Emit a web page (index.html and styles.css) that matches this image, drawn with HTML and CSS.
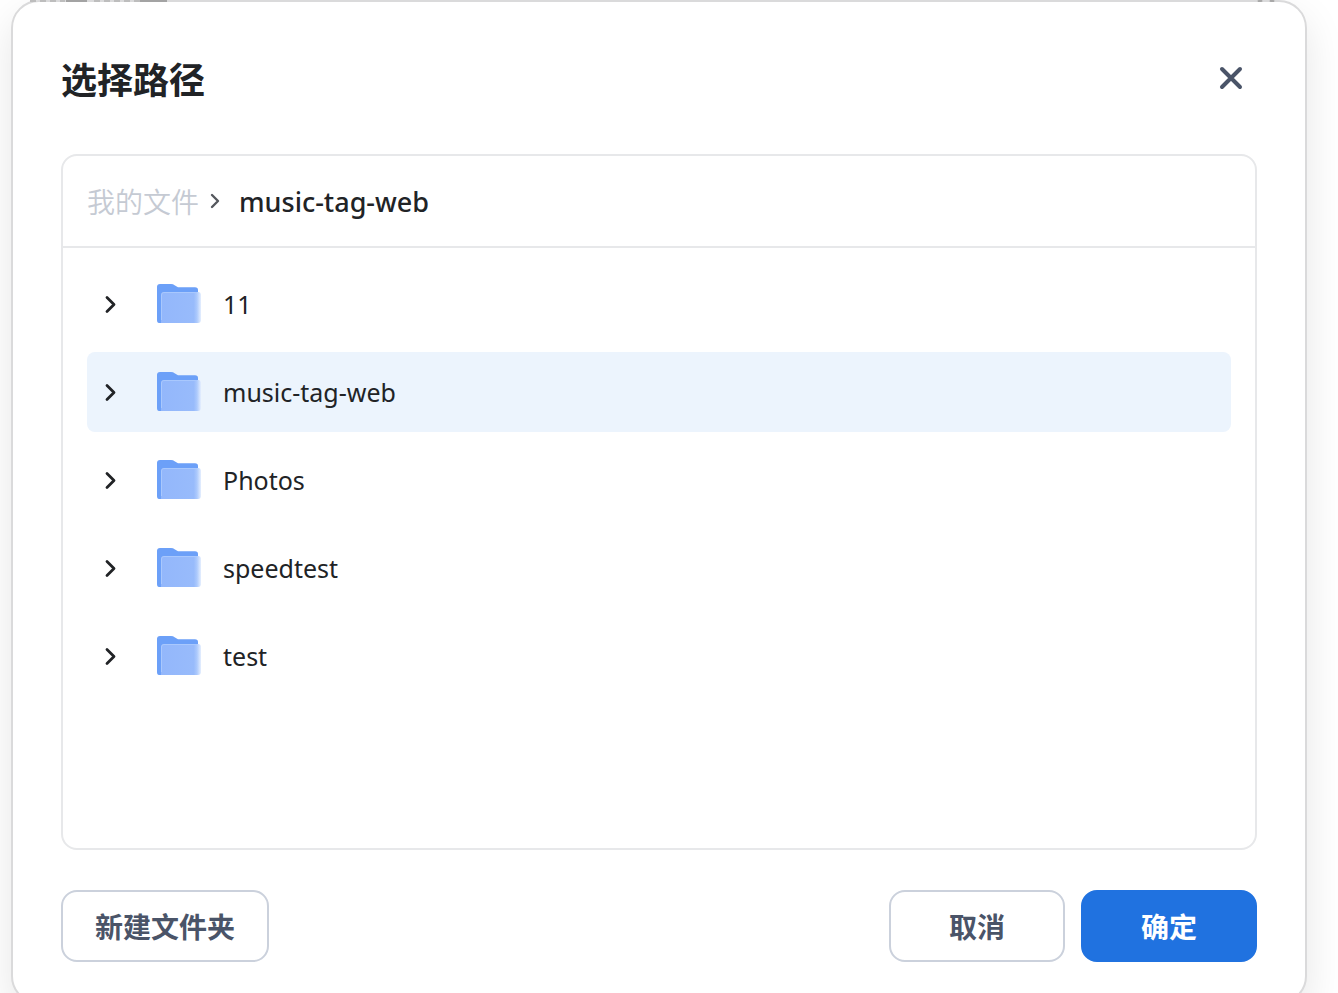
FILE: index.html
```html
<!DOCTYPE html>
<html lang="zh-CN">
<head>
  <meta charset="UTF-8">
  <meta name="viewport" content="width=device-width, initial-scale=1.0">
  <title>选择路径</title>
  <link rel="stylesheet" href="styles.css">
</head>
<body>

  <!-- Shared icons -->
  <svg class="icon-defs" aria-hidden="true">
    <defs>
      <linearGradient id="folderFront" x1="0" y1="0" x2="1" y2="0">
        <stop offset="0" stop-color="#93b7fb"/>
        <stop offset="0.82" stop-color="#98bbfb"/>
        <stop offset="0.9" stop-color="#adcafc"/>
        <stop offset="1" stop-color="#e6effe"/>
      </linearGradient>
      <symbol id="folder" viewBox="0 0 46 40">
        <path d="M1 3Q1 0 4 0H15Q17 0 19 1.400L22 3.200H39Q42 3.200 42 6V34L6 39H3Q1 39 1 36Z" fill="#6ca0f8"/>
        <path d="M5 11Q5 8 8 8H42Q45 8 45 11V36Q45 39 42 39H5Z" fill="url(#folderFront)"/>
        <path d="M5.500 36V11Q5.500 8.500 8 8.500H41" fill="none" stroke="#a9c8fd"/>
      </symbol>
      <symbol id="chevron" viewBox="0 0 24 24">
        <path d="M8 5.500L15 12.500L8 19.500" fill="none" stroke="currentColor" stroke-width="2.800" stroke-linecap="round" stroke-linejoin="round"/>
      </symbol>
      <symbol id="chevron-small" viewBox="0 0 24 24">
        <path d="M9 6L15 12L9 18" fill="none" stroke="currentColor" stroke-width="2.400" stroke-linecap="round" stroke-linejoin="round"/>
      </symbol>
    </defs>
  </svg>

  <main class="dialog" role="dialog" aria-labelledby="dialogTitle">
    <!-- Edge of the page that shows above the dialog -->
    <svg class="page-edge page-edge-left" viewBox="0 0 138 2" aria-hidden="true">
      <path d="M0 1H35M64 1H110" stroke="#bdbdbd" stroke-width="2" stroke-dasharray="6 4"/>
      <path d="M36 1H57M110 1H137" stroke="#a3a3a3" stroke-width="2"/>
    </svg>
    <svg class="page-edge page-edge-right" viewBox="0 0 18 2" aria-hidden="true">
      <path d="M1 2L5 0M17 2L13 0" stroke="#a8a8a8" stroke-width="3"/>
    </svg>

    <header class="dialog-header">
      <h1 id="dialogTitle">选择路径</h1>
      <button class="close" type="button" aria-label="关闭">
        <svg viewBox="0 0 32 32"><path d="M7 7L25 25M25 7L7 25" fill="none" stroke="currentColor" stroke-width="4" stroke-linecap="round"/></svg>
      </button>
    </header>

    <section class="browser">
      <nav class="breadcrumb">
        <a href="#">我的文件</a>
        <svg class="chevron"><use href="#chevron-small"/></svg>
        <span class="current">music-tag-web</span>
      </nav>
      <ul class="folders">
        <li><button class="folder" type="button"><svg class="chevron"><use href="#chevron"/></svg><svg class="folder-icon"><use href="#folder"/></svg><span>11</span></button></li>
        <li><button class="folder selected" type="button"><svg class="chevron"><use href="#chevron"/></svg><svg class="folder-icon"><use href="#folder"/></svg><span>music-tag-web</span></button></li>
        <li><button class="folder" type="button"><svg class="chevron"><use href="#chevron"/></svg><svg class="folder-icon"><use href="#folder"/></svg><span>Photos</span></button></li>
        <li><button class="folder" type="button"><svg class="chevron"><use href="#chevron"/></svg><svg class="folder-icon"><use href="#folder"/></svg><span>speedtest</span></button></li>
        <li><button class="folder" type="button"><svg class="chevron"><use href="#chevron"/></svg><svg class="folder-icon"><use href="#folder"/></svg><span>test</span></button></li>
      </ul>
    </section>

    <footer class="actions">
      <button class="btn new-folder" type="button">新建文件夹</button>
      <button class="btn" type="button">取消</button>
      <button class="btn primary" type="button">确定</button>
    </footer>
  </main>

</body>
</html>
```

FILE: styles.css
```css
* {
  box-sizing: border-box;
}

body {
  margin: 0;
  height: 100vh;
  padding: 0 31px 0 11px;
  overflow: hidden;
  background-color: #fff;
  color: #212326;
  font-family: "Noto Sans", "Noto Sans CJK SC", sans-serif;
  font-size: 25px;
}

button {
  font: inherit;
  color: inherit;
  border: none;
  background: none;
  cursor: pointer;
}

.icon-defs {
  position: absolute;
  width: 0;
  height: 0;
}

/* Dialog */
.dialog {
  position: relative;
  display: flex;
  flex-direction: column;
  min-height: calc(100vh + 11px);
  padding: 48px 48px 40px;
  border: 2px solid #dadadb;
  border-radius: 28px;
  background-color: #fff;
  box-shadow: 0 16px 40px rgba(0, 0, 0, 0.1);
}

.page-edge {
  position: absolute;
  top: -2px;
  height: 2px;
}

.page-edge-left {
  left: 17px;
  width: 138px;
}

.page-edge-right {
  right: 30px;
  width: 18px;
}

.dialog-header {
  display: flex;
  align-items: center;
  justify-content: space-between;
  height: 56px;
  margin-bottom: 48px;
  padding-right: 8px;
}

h1 {
  margin: 0;
  font-family: "Noto Sans CJK SC", sans-serif;
  font-size: 36px;
  line-height: 56px;
}

.close {
  width: 36px;
  height: 36px;
  padding: 2px;
  color: #4a5468;
}

.close svg {
  display: block;
  width: 32px;
  height: 32px;
}

/* Folder browser */
.browser {
  flex: 1;
  border: 2px solid #e7e8ea;
  border-radius: 16px;
}

.breadcrumb {
  display: flex;
  align-items: center;
  gap: 4px;
  height: 92px;
  padding: 0 24px;
  border-bottom: 2px solid #e7e8ea;
}

.breadcrumb a {
  color: #c5cad3;
  font-family: "Noto Sans CJK SC", sans-serif;
  font-size: 28px;
  font-weight: 350;
  text-decoration: none;
}

.breadcrumb .chevron {
  color: #55585e;
}

.breadcrumb .current {
  padding-left: 8px;
  font-size: 27px;
  font-weight: 500;
}

.chevron {
  flex: none;
  width: 24px;
  height: 24px;
}

.folders {
  display: grid;
  gap: 8px;
  margin: 0;
  padding: 16px 24px;
  list-style: none;
}

.folder {
  display: flex;
  align-items: center;
  width: 100%;
  height: 80px;
  padding: 0 12px;
  border-radius: 8px;
  text-align: left;
}

.folder.selected {
  background-color: #ecf4fd;
}

.folder-icon {
  width: 46px;
  height: 40px;
  margin: 0 21px 0 33px;
}

/* Footer buttons */
.actions {
  display: flex;
  gap: 16px;
  margin-top: 40px;
}

.btn {
  min-width: 176px;
  height: 72px;
  padding: 0 32px;
  border: 2px solid #cbd1dc;
  border-radius: 16px;
  color: #4a5468;
  font-family: "Noto Sans CJK SC", sans-serif;
  font-size: 28px;
  font-weight: 700;
}

.btn.new-folder {
  margin-right: auto;
}

.btn.primary {
  border-color: #2072e0;
  background-color: #2072e0;
  color: #fff;
}
```
